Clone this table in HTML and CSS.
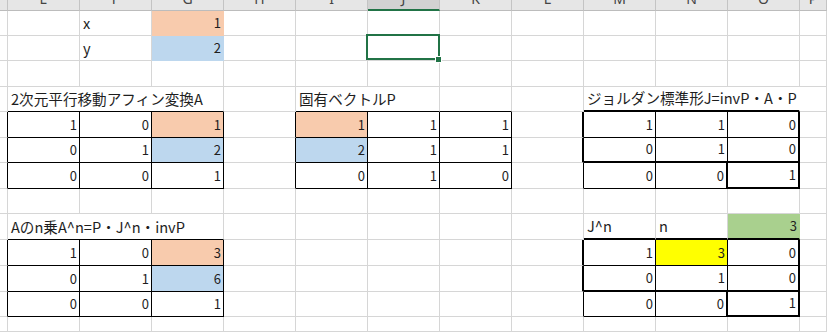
FILE: index.html
```html
<!DOCTYPE html>
<html lang="ja">
<head>
<meta charset="utf-8">
<title>Sheet</title>
<link rel="stylesheet" href="styles.css">
</head>
<body>
<div class="sheet">
  <!-- header -->
  <div class="h"></div>
  <div class="h"><span>E</span></div>
  <div class="h"><span>F</span></div>
  <div class="h"><span>G</span></div>
  <div class="h"><span>H</span></div>
  <div class="h"><span>I</span></div>
  <div class="h hs"><span>J</span></div>
  <div class="h"><span>K</span></div>
  <div class="h"><span>L</span></div>
  <div class="h"><span>M</span></div>
  <div class="h"><span>N</span></div>
  <div class="h"><span>O</span></div>
  <div class="h"><span>P</span></div>

  <!-- row 1 -->
  <div class="c"></div><div class="c"></div><div class="c"><span>x</span></div><div class="c n or">1</div>
  <div class="c"></div><div class="c"></div><div class="c"></div><div class="c"></div><div class="c"></div>
  <div class="c"></div><div class="c"></div><div class="c"></div><div class="c"></div>

  <!-- row 2 -->
  <div class="c"></div><div class="c"></div><div class="c"><span>y</span></div><div class="c n bl">2</div>
  <div class="c"></div><div class="c"></div><div class="c sel"><span class="selbox"></span><span class="handle"></span></div><div class="c"></div><div class="c"></div>
  <div class="c"></div><div class="c"></div><div class="c"></div><div class="c"></div>

  <!-- row 3 -->
  <div class="c"></div><div class="c"></div><div class="c"></div><div class="c"></div>
  <div class="c"></div><div class="c"></div><div class="c"></div><div class="c"></div><div class="c"></div>
  <div class="c"></div><div class="c"></div><div class="c"></div><div class="c"></div>

  <!-- row 4 -->
  <div class="c"></div>
  <div class="c lab s3 bb">2次元平行移動アフィン変換A</div>
  <div class="c"></div>
  <div class="c lab s2 bb">固有ベクトルP</div>
  <div class="c bb"></div>
  <div class="c"></div>
  <div class="c lab s3 bb2 spill">ジョルダン標準形J=invP・A・P</div>
  <div class="c"></div>

  <!-- row 5 -->
  <div class="c br"></div>
  <div class="c n t">1</div><div class="c n t">0</div><div class="c n or t">1</div>
  <div class="c br"></div>
  <div class="c n or t">1</div><div class="c n t">1</div><div class="c n t">1</div>
  <div class="c br2"></div>
  <div class="c n t">1</div><div class="c n t">1</div><div class="c n t br2">0</div>
  <div class="c"></div>

  <!-- row 6 -->
  <div class="c br"></div>
  <div class="c n t">0</div><div class="c n t">1</div><div class="c n bl t">2</div>
  <div class="c br"></div>
  <div class="c n bl t">2</div><div class="c n t">1</div><div class="c n t">1</div>
  <div class="c br2"></div>
  <div class="c n t bb2">0</div><div class="c n t bb2">1</div><div class="c n t br2 bb2">0</div>
  <div class="c"></div>

  <!-- row 7 -->
  <div class="c br"></div>
  <div class="c n t">0</div><div class="c n t">0</div><div class="c n t">1</div>
  <div class="c br"></div>
  <div class="c n t">0</div><div class="c n t">1</div><div class="c n t">0</div>
  <div class="c br"></div>
  <div class="c n t">0</div><div class="c n t br2">0</div><div class="c n t br2 bb2">1</div>
  <div class="c"></div>

  <!-- row 8 -->
  <div class="c"></div><div class="c"></div><div class="c"></div><div class="c"></div>
  <div class="c"></div><div class="c"></div><div class="c"></div><div class="c"></div><div class="c"></div>
  <div class="c"></div><div class="c"></div><div class="c"></div><div class="c"></div>

  <!-- row 9 -->
  <div class="c"></div>
  <div class="c lab s3 bb">Aのn乗A^n=P・J^n・invP</div>
  <div class="c"></div><div class="c"></div><div class="c"></div><div class="c"></div><div class="c"></div>
  <div class="c bb2"><span>J^n</span></div>
  <div class="c bb2"><span>n</span></div>
  <div class="c n gr bb2">3</div>
  <div class="c"></div>

  <!-- row 10 -->
  <div class="c br"></div>
  <div class="c n t">1</div><div class="c n t">0</div><div class="c n or t">3</div>
  <div class="c"></div><div class="c"></div><div class="c"></div><div class="c"></div>
  <div class="c br2"></div>
  <div class="c n t">1</div><div class="c n ye t">3</div><div class="c n t br2">0</div>
  <div class="c"></div>

  <!-- row 11 -->
  <div class="c br"></div>
  <div class="c n t">0</div><div class="c n t">1</div><div class="c n bl t">6</div>
  <div class="c"></div><div class="c"></div><div class="c"></div><div class="c"></div>
  <div class="c br2"></div>
  <div class="c n t bb2">0</div><div class="c n t bb2">1</div><div class="c n t br2 bb2">0</div>
  <div class="c"></div>

  <!-- row 12 -->
  <div class="c br"></div>
  <div class="c n t">0</div><div class="c n t">0</div><div class="c n t">1</div>
  <div class="c"></div><div class="c"></div><div class="c"></div><div class="c"></div>
  <div class="c br"></div>
  <div class="c n t">0</div><div class="c n t br2">0</div><div class="c n t br2 bb2">1</div>
  <div class="c"></div>

  <!-- row 13 -->
  <div class="c"></div><div class="c"></div><div class="c"></div><div class="c"></div>
  <div class="c"></div><div class="c"></div><div class="c"></div><div class="c"></div><div class="c"></div>
  <div class="c"></div><div class="c"></div><div class="c"></div><div class="c"></div>
</div>
</body>
</html>
```

FILE: styles.css
```css
html, body {
  margin: 0;
  padding: 0;
  background: #fff;
}

.sheet {
  display: grid;
  grid-template-columns: 8px repeat(11, 72px) 27px;
  grid-template-rows: 11px 25px 25px 26px 25px 26px 25px 26px 25px 26px 26px 26px 25px 15px;
  width: 827px;
  height: 332px;
  overflow: hidden;
  font-family: "Noto Sans CJK JP", "Noto Sans", sans-serif;
  color: #1e1e1e;
}

/* column headers (cut off at the top) */
.h {
  box-sizing: border-box;
  background: #e6e6e6;
  border-right: 1px solid #c4c4c4;
  border-bottom: 1px solid #bcbcbc;
  display: flex;
  justify-content: center;
  align-items: flex-end;
  overflow: hidden;
  font-family: "Noto Sans", sans-serif;
  font-size: 14px;
  line-height: 16px;
  color: #444;
}
.h span {
  margin-bottom: 3px;
}
.h.hs {
  background: #d2d2d2;
  border-bottom: 2px solid #217346;
}

/* cells */
.c {
  box-sizing: border-box;
  border-right: 1px solid #d6d6d6;
  border-bottom: 1px solid #d6d6d6;
  display: flex;
  align-items: flex-end;
  justify-content: flex-start;
  white-space: nowrap;
  font-size: 14.6px;
  line-height: 18px;
  padding: 0 2px 3px 3px;
}
.n {
  justify-content: flex-end;
  font-size: 13px;
}
.lab {
  letter-spacing: 0;
}
.s2 { grid-column: span 2; }
.s3 { grid-column: span 3; }

/* fills */
.or { background: #f8cbad; border-right-color: #f8cbad; border-bottom-color: #f8cbad; }
.bl { background: #bdd7ee; border-right-color: #bdd7ee; border-bottom-color: #bdd7ee; }
.gr { background: #a9d08e; border-right-color: #a9d08e; border-bottom-color: #a9d08e; }
.ye { background: #ffff00; border-right-color: #ffff00; border-bottom-color: #ffff00; }

/* borders */
.spill { border-right-color: transparent; }
.br { border-right-color: #000; }
.bb { border-bottom-color: #000; }
.t { border-right-color: #000; border-bottom-color: #000; }
.br2 { border-right: 2px solid #000; }
.bb2 { border-bottom: 2px solid #000; }

/* active cell */
.sel {
  position: relative;
}
.selbox {
  position: absolute;
  left: -2px;
  top: -2px;
  right: -1px;
  bottom: 0;
  border: 2px solid #217346;
}
.handle {
  position: absolute;
  width: 5px;
  height: 5px;
  right: -2px;
  bottom: -2px;
  background: #217346;
  box-shadow: 0 0 0 1px #fff;
}
```
